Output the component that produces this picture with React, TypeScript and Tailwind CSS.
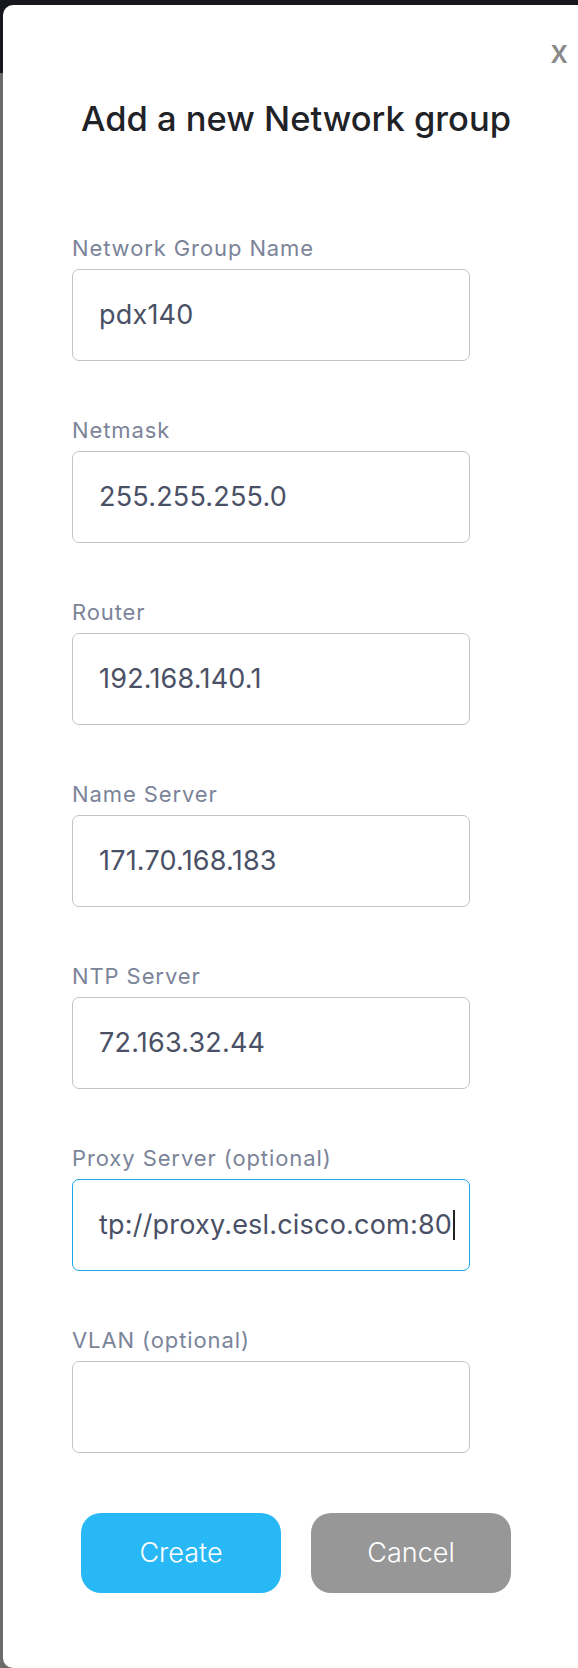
import React from "react";

const fields: { label: string; value: string; focused?: boolean }[] = [
  { label: "Network Group Name", value: "pdx140" },
  { label: "Netmask", value: "255.255.255.0" },
  { label: "Router", value: "192.168.140.1" },
  { label: "Name Server", value: "171.70.168.183" },
  { label: "NTP Server", value: "72.163.32.44" },
  { label: "Proxy Server (optional)", value: "tp://proxy.esl.cisco.com:80", focused: true },
  { label: "VLAN (optional)", value: "" },
];

export default function App() {
  return (
    <div
      className="relative w-[578px] h-[1668px] overflow-hidden bg-[#6b6b6b]"
      style={{ fontFamily: "Inter, 'Noto Sans', sans-serif" }}
    >
      <div className="h-[73px] w-full bg-[#16181e]" />
      <div className="absolute left-[3px] top-[5px] w-[586px] h-[1663px] rounded-[10px] bg-white pt-[93px] flex flex-col">
        <div className="absolute right-[21px] top-[28px] text-[32px] leading-[38px] font-medium text-[#8a8a8a]">
          x
        </div>
        <h1 className="text-center text-[34.5px] leading-[42px] font-medium text-[#1f2227]">
          Add a new Network group
        </h1>
        <div className="mt-[96px] ml-[69px] w-[398px] flex flex-col gap-[57px]">
          {fields.map((f) => (
            <div key={f.label} className="flex flex-col">
              <div className="text-[22px] leading-[24px] tracking-[0.9px] text-[#7b8499] whitespace-nowrap">
                {f.label}
              </div>
              <div
                className={
                  f.focused
                    ? "mt-[9px] h-[92px] rounded-[7px] border border-[#1ba6e6] flex items-center pl-[26px] overflow-hidden"
                    : "mt-[9px] h-[92px] rounded-[7px] border border-[#c4c4c4] flex items-center pl-[26px] overflow-hidden"
                }
              >
                <span className="text-[27px] leading-[32px] tracking-[0.2px] text-[#4a5066] whitespace-nowrap">
                  {f.value}
                </span>
                {f.focused && <span className="ml-[1px] w-[2px] h-[30px] bg-[#222]" />}
              </div>
            </div>
          ))}
        </div>
        <div className="mt-[60px] flex justify-center gap-[30px]">
          <button className="w-[200px] h-[80px] rounded-[20px] bg-[#29b8f6] text-white text-[27px] font-light">
            Create
          </button>
          <button className="w-[200px] h-[80px] rounded-[20px] bg-[#979797] text-white text-[27px] font-light">
            Cancel
          </button>
        </div>
      </div>
    </div>
  );
}
